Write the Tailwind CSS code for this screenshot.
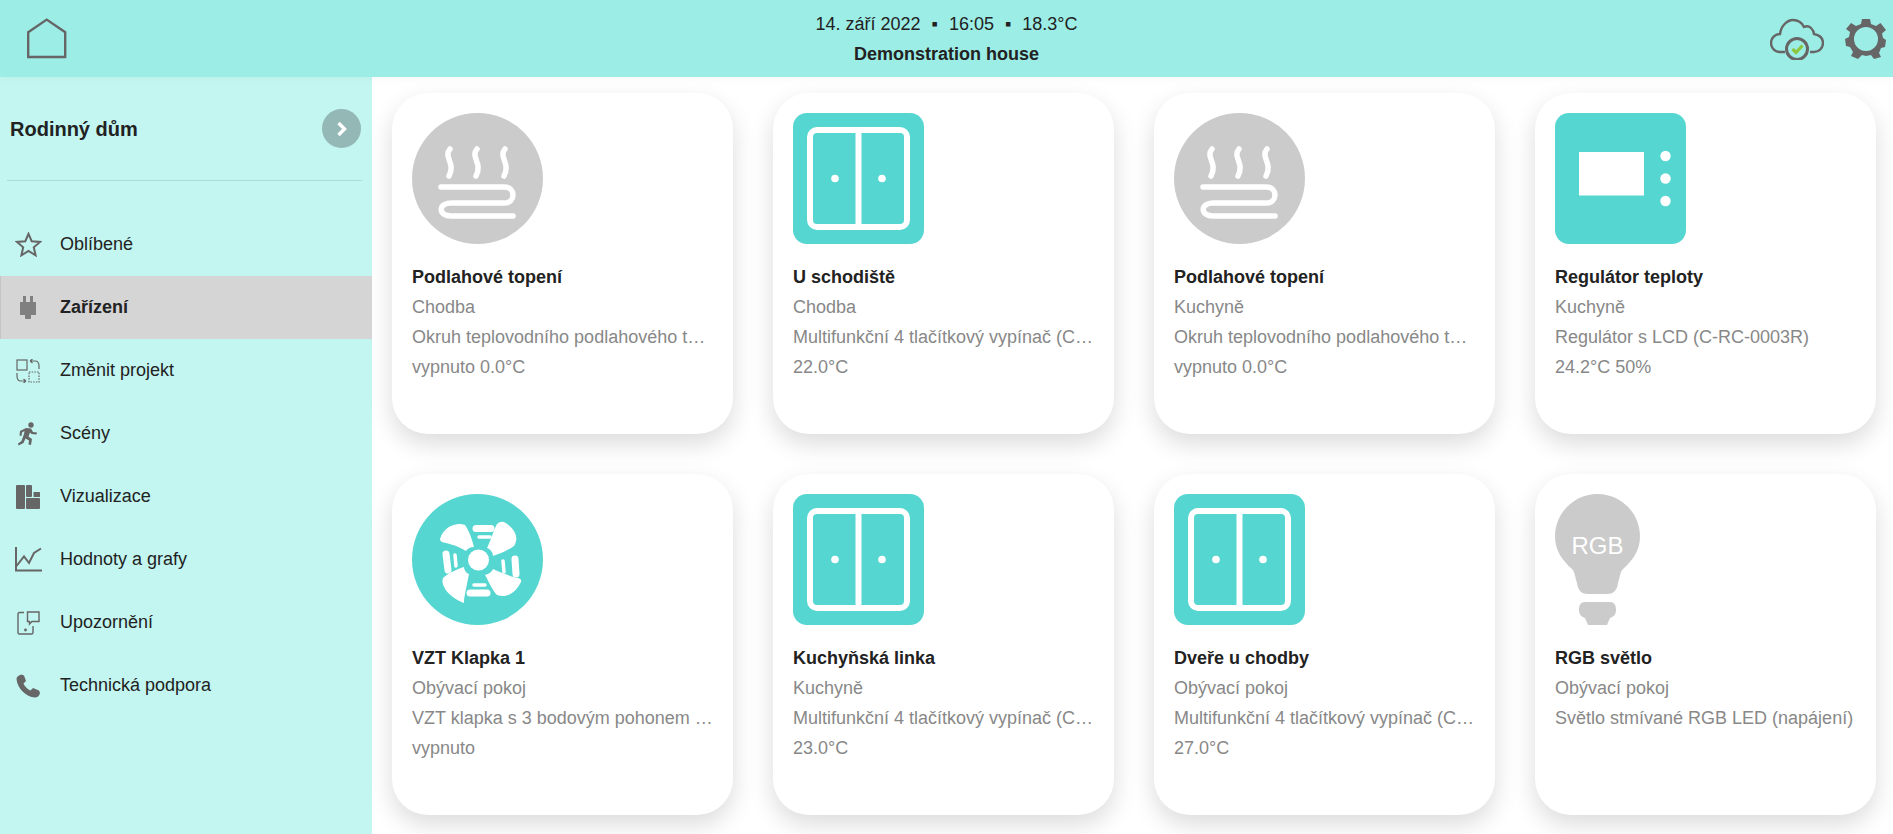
<!DOCTYPE html>
<html lang="cs">
<head>
    <meta charset="UTF-8">
    <meta name="viewport" content="width=device-width, initial-scale=1.0">
    <script src="https://cdn.jsdelivr.net/npm/@tailwindcss/browser@4"></script>
    <title>Demonstration house</title>
</head>
<body class="w-screen h-screen overflow-hidden bg-white font-['Liberation_Sans',Arial,sans-serif] text-[#222]">

    <!-- horni lista -->
    <header class="h-[77px] bg-[#9cede6] flex items-center justify-between relative z-10 shadow-[0_2px_8px_rgba(0,0,0,0.03)]">
        <div class="pl-[26px] pt-[1px]">
            <svg width="42" height="42" viewBox="0 0 42 42" fill="none" stroke="#666" stroke-width="2.4"><path d="M2.2 14.2 L20.7 1.6 L39.2 14.2 V39 H2.2 Z"/></svg>
        </div>
        <div class="absolute left-0 right-0 text-center">
            <div class="text-[18px] leading-[30px] flex justify-center gap-[11px] pl-[0px]"><span>14. září 2022</span><span>▪</span><span>16:05</span><span>▪</span><span>18.3°C</span></div>
            <div class="text-[18px] leading-[30px] font-bold">Demonstration house</div>
        </div>
        <div class="flex items-center gap-[21px] pr-[6px]">
            <svg width="54" height="42" viewBox="0 0 54 42" fill="none" stroke="#666" stroke-width="2.4">
                <path d="M15 34 H10 C4 34 1 29 1 25 C1 20 5 16 10 16 C11 8 17 2 23 2 C28 2 32 5 34 9 C36 8 39 8 41 10 C43 12 44 14 44 16 C49 17 53 20 53 25 C53 30 49 34 44 34 H40"/>
                <circle cx="27" cy="31" r="10.5" stroke-width="3"/>
                <path d="M22.5 31 L26 34.5 L32.5 27.5" stroke="#8cc63f" stroke-width="3.2"/>
            </svg>
            <svg width="42" height="42" viewBox="0 0 42 42" fill="#666">
                <path fill-rule="evenodd" d="M17 1 H25 L26 6 L31 8 L35.5 5 L41 12 L37 15.5 L38 20 L41 22 L40 29 L36 30 L34 35 L36 39 L29 41 L26 37 L21 38 L17 37 L13 41 L6 38 L8 34 L5 29 L1 28 L0 21 L4 19 L5 14 L1 11 L6 5 L11 8 L16 6 Z M21 9 A12 12 0 1 0 21 33 A12 12 0 1 0 21 9 Z"/>
            </svg>
        </div>
    </header>

    <div class="flex h-[757px]">
        <!-- bocni menu -->
        <aside class="w-[372px] shrink-0 bg-[#c3f6f1]">
            <div class="h-[103px] flex items-center justify-between pl-[10px] pr-[11px]">
                <span class="text-[20px] font-bold">Rodinný dům</span>
                <span class="w-[39px] h-[39px] rounded-full bg-[#94b8b5] flex items-center justify-center">
                    <svg width="12" height="16" viewBox="0 0 12 16" fill="none" stroke="#fff" stroke-width="3.4"><path d="M2.5 2 L8.5 8 L2.5 14"/></svg>
                </span>
            </div>
            <div class="mx-[7px] w-[355px] border-t border-[#acdcd8]"></div>
            <nav class="mt-[51px] flex flex-col">
                <a class="h-[63px] flex items-center pl-[60px] text-[18px] relative -mt-[19px]">
                    <svg class="absolute left-[15px]" width="27" height="25" viewBox="0 0 27 25" fill="none" stroke="#666" stroke-width="2"><path d="M13.5 1.8 L16.7 9.2 L25 9.9 L18.8 15.3 L20.6 23.3 L13.5 19 L6.4 23.3 L8.2 15.3 L2 9.9 L10.3 9.2 Z"/></svg>
                    Oblíbené
                </a>
                <a class="h-[63px] flex items-center pl-[59px] text-[18px] font-bold relative bg-[#d5d5d5] border-l border-[#c5c5c5]">
                    <svg class="absolute left-[18px]" width="18" height="24" viewBox="0 0 18 24" fill="#808080"><path d="M4 0 H7 V6 H11 V0 H14 V6 H17 V19 H12 V22 Q12 23 11 23 H7 Q6 23 6 22 V19 H1 V6 H4 Z"/></svg>
                    Zařízení
                </a>
                <a class="h-[63px] flex items-center pl-[60px] text-[18px] relative">
                    <svg class="absolute left-[16px]" width="24" height="24" viewBox="0 0 24 24" fill="none" stroke="#666" stroke-width="1.2">
                        <rect x="1" y="1" width="10" height="10"/>
                        <rect x="13" y="13" width="10" height="10" stroke-dasharray="1.5 1.2"/>
                        <path d="M14 2 H19 Q23 2 23 7 V10 M14 2 L16.5 0 M14 2 L16.5 4"/>
                        <path d="M10 22 H5 Q1 22 1 17 V14 M10 22 L7.5 20 M10 22 L7.5 24"/>
                    </svg>
                    Změnit projekt
                </a>
                <a class="h-[63px] flex items-center pl-[60px] text-[18px] relative">
                    <svg class="absolute left-[18px]" width="20" height="24" viewBox="0 0 20 24" fill="#666"><circle cx="13" cy="3" r="2.7"/><path d="M8 6 L13 6.5 L15 10 L19 10.5 L18.5 12.5 L13.5 12 L12 10.5 L10.5 14.5 L14 17 L13 23 L10.5 22.5 L11 18.5 L7.5 16.5 L5.5 21 L0.5 23.5 L0 21.5 L3.5 19 L6 12 L6.5 9 L4 10.5 L3.5 14 L1.5 13.5 L2 9 Z"/></svg>
                    Scény
                </a>
                <a class="h-[63px] flex items-center pl-[60px] text-[18px] relative">
                    <svg class="absolute left-[16px]" width="24" height="24" viewBox="0 0 24 24" fill="#666"><rect x="0" y="0" width="9" height="24" rx="1"/><rect x="10" y="0" width="6" height="12" rx="1"/><rect x="10" y="13" width="14" height="11" rx="1"/><rect x="17.500" y="7" width="6.500" height="5" rx="0.500"/></svg>
                    Vizualizace
                </a>
                <a class="h-[63px] flex items-center pl-[60px] text-[18px] relative">
                    <svg class="absolute left-[15px]" width="27" height="25" viewBox="0 0 27 25" fill="none" stroke="#666" stroke-width="2"><path d="M1 0 V23.500 H27"/><path d="M1.500 19 L9 9.500 L14 16 L19 6 L26 1.500"/></svg>
                    Hodnoty a grafy
                </a>
                <a class="h-[63px] flex items-center pl-[60px] text-[18px] relative">
                    <svg class="absolute left-[17px]" width="23" height="24" viewBox="0 0 23 24" fill="none" stroke="#666" stroke-width="1.400">
                        <path d="M7 1.500 H2.500 Q1 1.500 1 3 V21.500 Q1 23 2.500 23 H14.500 Q16 23 16 21.500 V15"/>
                        <path d="M10.500 1 H22 V10.500 H15 L12.500 13 V10.500 H10.500 Z"/>
                        <circle cx="8.500" cy="19" r="0.700" fill="#666"/>
                    </svg>
                    Upozornění
                </a>
                <a class="h-[63px] flex items-center pl-[60px] text-[18px] relative">
                    <svg class="absolute left-[16px]" width="24" height="24" viewBox="0 0 24 24" fill="#666"><path d="M5.500 0.500 L8 1.500 L10 7 L7.500 9.500 C8.500 12 11.500 15.500 14.500 16.500 L17 14 L23 16.500 L24 19 C23.500 22 21 23.500 19 23.500 C10 23 1 14 0.500 5 C0.500 3 2.500 1 5.500 0.500 Z"/></svg>
                    Technická podpora
                </a>
            </nav>
        </aside>

        <!-- karty zarizeni -->
        <main class="flex-1 pl-[20px] pt-[16px] grid grid-cols-[repeat(4,341px)] auto-rows-[341px] gap-[40px] content-start bg-white">

            <div class="bg-white rounded-[36px] shadow-[0_10px_25px_rgba(0,0,0,0.14)] p-[20px]">
                <svg width="131" height="131" viewBox="0 0 131 131" fill="none" stroke="#fff" stroke-width="5.500" stroke-linecap="round"><circle cx="65.500" cy="65.500" r="65.500" fill="#cbcbcb" stroke="none"/><path d="M38 36 C31 44 44 50 37 63 M65 36 C58 44 71 50 64 63 M93 36 C86 44 99 50 92 63"/><path d="M29 74 H92 C104 74 104 90 92 90 H39 C26 90 26 103 39 103 H101"/></svg>
                <div class="mt-[18px] text-[18px] leading-[30px] text-[#888]"><div class="font-bold text-[#222]">Podlahové topení</div><div>Chodba</div><div class="truncate">Okruh teplovodního podlahového topení</div><div>vypnuto 0.0°C</div></div>
            </div>

            <div class="bg-white rounded-[36px] shadow-[0_10px_25px_rgba(0,0,0,0.14)] p-[20px]">
                <svg width="131" height="131" viewBox="0 0 131 131"><rect width="131" height="131" rx="14" fill="#55d6d1"/><rect x="17" y="17" width="97" height="97" rx="7" fill="none" stroke="#fff" stroke-width="6"/><path d="M65.500 17 V114" stroke="#fff" stroke-width="6"/><circle cx="42" cy="65.500" r="3.800" fill="#fff"/><circle cx="89" cy="65.500" r="3.800" fill="#fff"/></svg>
                <div class="mt-[18px] text-[18px] leading-[30px] text-[#888]"><div class="font-bold text-[#222]">U schodiště</div><div>Chodba</div><div class="truncate">Multifunkční 4 tlačítkový vypínač (C-RC)</div><div>22.0°C</div></div>
            </div>

            <div class="bg-white rounded-[36px] shadow-[0_10px_25px_rgba(0,0,0,0.14)] p-[20px]">
                <svg width="131" height="131" viewBox="0 0 131 131" fill="none" stroke="#fff" stroke-width="5.500" stroke-linecap="round"><circle cx="65.500" cy="65.500" r="65.500" fill="#cbcbcb" stroke="none"/><path d="M38 36 C31 44 44 50 37 63 M65 36 C58 44 71 50 64 63 M93 36 C86 44 99 50 92 63"/><path d="M29 74 H92 C104 74 104 90 92 90 H39 C26 90 26 103 39 103 H101"/></svg>
                <div class="mt-[18px] text-[18px] leading-[30px] text-[#888]"><div class="font-bold text-[#222]">Podlahové topení</div><div>Kuchyně</div><div class="truncate">Okruh teplovodního podlahového topení</div><div>vypnuto 0.0°C</div></div>
            </div>

            <div class="bg-white rounded-[36px] shadow-[0_10px_25px_rgba(0,0,0,0.14)] p-[20px]">
                <svg width="131" height="131" viewBox="0 0 131 131"><rect width="131" height="131" rx="14" fill="#55d6d1"/><rect x="24" y="39" width="65" height="43.500" fill="#fff"/><circle cx="110.500" cy="43" r="5.200" fill="#fff"/><circle cx="110.500" cy="65.500" r="5.200" fill="#fff"/><circle cx="110.500" cy="88" r="5.200" fill="#fff"/></svg>
                <div class="mt-[18px] text-[18px] leading-[30px] text-[#888]"><div class="font-bold text-[#222]">Regulátor teploty</div><div>Kuchyně</div><div class="truncate">Regulátor s LCD (C-RC-0003R)</div><div>24.2°C 50%</div></div>
            </div>

            <div class="bg-white rounded-[36px] shadow-[0_10px_25px_rgba(0,0,0,0.14)] p-[20px]">
                <svg width="131" height="131" viewBox="0 0 131 131" fill="#fff"><circle cx="65.500" cy="65.500" r="65.500" fill="#55d6d1"/><circle cx="66.500" cy="66" r="10.500"/><path id="blade" d="M28 45 C32 32 45 28 53 31 C58 38 60 46 62 53 C58 53 55 55 54 57 C45 51 34 49 30 48 Q28 47 28 45 Z"/><path d="M92 28 C104 35 107 44 102 52 C95 57 87 60 81 62 C81 58 78 55 75 54 C79 46 82 35 85 30 Q88 27 92 28 Z"/><path d="M109 88 C103 100 94 104 85 101 C80 96 76 86 73 81 C77 80 80 78 81 75 C90 79 100 83 106 84 Q110 85 109 88 Z"/><path d="M52 109 C38 104 28 92 31 84 C36 79 46 75 52 73 C52 76 54 79 57 80 C55 90 53 100 52 106 Z"/><g stroke="#fff" stroke-linecap="round" fill="none"><path d="M64 34.500 H79" stroke-width="7"/><path d="M67 43 H78" stroke-width="3.500"/><path d="M34 60 L36 76" stroke-width="7"/><path d="M43 61 L44 72" stroke-width="3.500"/><path d="M103 65 L104 80" stroke-width="7"/><path d="M91 67 L92 78" stroke-width="3.500"/><path d="M58 99 H75" stroke-width="7"/><path d="M62 91 H73" stroke-width="3.500"/></g></svg>
                <div class="mt-[18px] text-[18px] leading-[30px] text-[#888]"><div class="font-bold text-[#222]">VZT Klapka 1</div><div>Obývací pokoj</div><div class="truncate">VZT klapka s 3 bodovým pohonem (C-HM)</div><div>vypnuto</div></div>
            </div>

            <div class="bg-white rounded-[36px] shadow-[0_10px_25px_rgba(0,0,0,0.14)] p-[20px]">
                <svg width="131" height="131" viewBox="0 0 131 131"><rect width="131" height="131" rx="14" fill="#55d6d1"/><rect x="17" y="17" width="97" height="97" rx="7" fill="none" stroke="#fff" stroke-width="6"/><path d="M65.500 17 V114" stroke="#fff" stroke-width="6"/><circle cx="42" cy="65.500" r="3.800" fill="#fff"/><circle cx="89" cy="65.500" r="3.800" fill="#fff"/></svg>
                <div class="mt-[18px] text-[18px] leading-[30px] text-[#888]"><div class="font-bold text-[#222]">Kuchyňská linka</div><div>Kuchyně</div><div class="truncate">Multifunkční 4 tlačítkový vypínač (C-RC)</div><div>23.0°C</div></div>
            </div>

            <div class="bg-white rounded-[36px] shadow-[0_10px_25px_rgba(0,0,0,0.14)] p-[20px]">
                <svg width="131" height="131" viewBox="0 0 131 131"><rect width="131" height="131" rx="14" fill="#55d6d1"/><rect x="17" y="17" width="97" height="97" rx="7" fill="none" stroke="#fff" stroke-width="6"/><path d="M65.500 17 V114" stroke="#fff" stroke-width="6"/><circle cx="42" cy="65.500" r="3.800" fill="#fff"/><circle cx="89" cy="65.500" r="3.800" fill="#fff"/></svg>
                <div class="mt-[18px] text-[18px] leading-[30px] text-[#888]"><div class="font-bold text-[#222]">Dveře u chodby</div><div>Obývací pokoj</div><div class="truncate">Multifunkční 4 tlačítkový vypínač (C-RC)</div><div>27.0°C</div></div>
            </div>

            <div class="bg-white rounded-[36px] shadow-[0_10px_25px_rgba(0,0,0,0.14)] p-[20px]">
                <div class="relative w-[85px] h-[131px]">
                    <svg width="85" height="131" viewBox="0 0 85 131" fill="#cbcbcb"><path d="M42.500 0 C66 0 85 19 85 42.500 C85 57 77 67 68 75 C65 78 65 83 63 89 C62 97 58 100 52 100 H33 C27 100 23 97 22 89 C20 83 20 78 17 75 C8 67 0 57 0 42.500 C0 19 19 0 42.500 0 Z"/><path d="M30 108 H55 C60 108 61 112 61 116 C61 121 58 123 55 124 L52 131 H33 L30 124 C27 123 24 121 24 116 C24 112 25 108 30 108 Z"/></svg>
                    <span class="absolute inset-x-0 top-[37px] text-center text-white text-[24px] leading-[30px]">RGB</span>
                </div>
                <div class="mt-[18px] text-[18px] leading-[30px] text-[#888]"><div class="font-bold text-[#222]">RGB světlo</div><div>Obývací pokoj</div><div class="truncate">Světlo stmívané RGB LED (napájení)</div></div>
            </div>

        </main>
    </div>
</body>
</html>
